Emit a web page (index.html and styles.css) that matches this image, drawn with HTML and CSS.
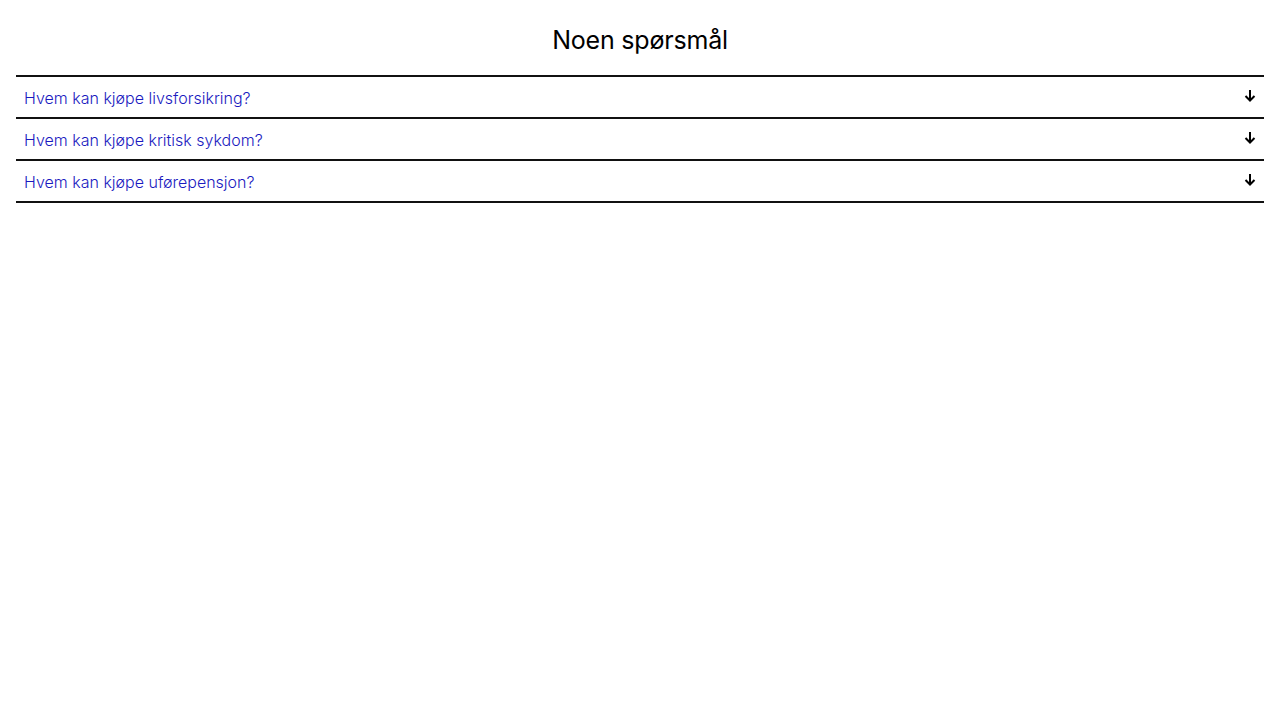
FILE: index.html
```html
<!DOCTYPE html>
<html lang="no">
<head>
<meta charset="utf-8">
<title>Noen spørsmål</title>
<link rel="stylesheet" href="styles.css">
</head>
<body>
<section class="faq">
  <h2 class="faq-title">Noen spørsmål</h2>
  <ul class="faq-list">
    <li class="faq-item"><span class="faq-q">Hvem kan kjøpe livsforsikring?</span><svg class="faq-arrow" width="12" height="13" viewBox="0 0 12 13"><path d="M6 1v10.5M1.5 7l4.5 4.5L10.5 7" fill="none" stroke="#000" stroke-width="2"/></svg></li>
    <li class="faq-item"><span class="faq-q">Hvem kan kjøpe kritisk sykdom?</span><svg class="faq-arrow" width="12" height="13" viewBox="0 0 12 13"><path d="M6 1v10.5M1.5 7l4.5 4.5L10.5 7" fill="none" stroke="#000" stroke-width="2"/></svg></li>
    <li class="faq-item"><span class="faq-q">Hvem kan kjøpe uførepensjon?</span><svg class="faq-arrow" width="12" height="13" viewBox="0 0 12 13"><path d="M6 1v10.5M1.5 7l4.5 4.5L10.5 7" fill="none" stroke="#000" stroke-width="2"/></svg></li>
  </ul>
</section>
</body>
</html>
```
FILE: styles.css
```css
* { box-sizing: border-box; }
body {
  margin: 0;
  background: #fff;
  font-family: Inter, "Noto Sans", sans-serif;
  color: #000;
}
.faq { padding: 24px 16px; }
.faq-title {
  margin: 0 0 19px;
  text-align: center;
  font-size: 25px;
  font-weight: 400;
  line-height: 32px;
  letter-spacing: -0.2px;
}
.faq-list {
  list-style: none;
  margin: 0;
  padding: 0;
  border-top: 2px solid #111;
}
.faq-item {
  display: flex;
  justify-content: space-between;
  align-items: flex-start;
  height: 42px;
  border-bottom: 2px solid #111;
  padding: 11px 8px 0 8px;
}
.faq-q {
  color: #1a1ac0;
  font-size: 16px;
  font-weight: 300;
  line-height: 20px;
  letter-spacing: 0;
}
.faq-arrow { margin-top: 1px; margin-right: 0; }
```
